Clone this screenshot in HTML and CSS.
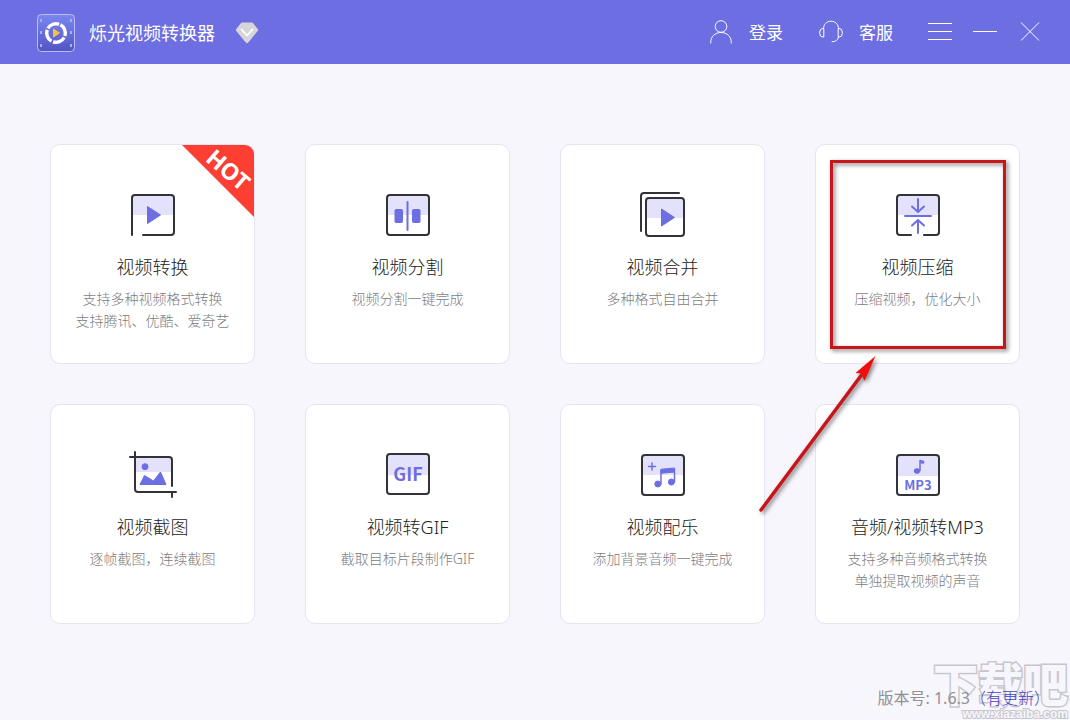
FILE: index.html
```html
<!DOCTYPE html>
<html lang="zh-CN">
<head>
  <meta charset="UTF-8" />
  <meta name="viewport" content="width=device-width, initial-scale=1.0"/>
  <title>烁光视频转换器</title>
  <link rel="stylesheet" href="styles.css">
</head>
<body>
  <header class="topbar">
    <svg class="logo" viewBox="0 0 38 38">
      <defs>
        <linearGradient id="logoBg" x1="0" y1="0" x2="0" y2="1">
          <stop offset="0" stop-color="#7b86f0"/>
          <stop offset="1" stop-color="#5255c4"/>
        </linearGradient>
      </defs>
      <rect x="0.5" y="0.5" width="37" height="37" rx="4" fill="url(#logoBg)" stroke="#b9bdf6"/>
      <g fill="#a9b0f7">
        <rect x="3" y="5" width="2" height="3"/><rect x="3" y="17" width="2" height="3"/><rect x="3" y="30" width="2" height="3"/>
        <rect x="33" y="5" width="2" height="3"/><rect x="33" y="17" width="2" height="3"/><rect x="33" y="30" width="2" height="3"/>
      </g>
      <circle cx="19" cy="19" r="9.3" fill="none" stroke="#fff" stroke-width="3.4" stroke-dasharray="12.9 1.7" transform="rotate(-62 19 19)"/>
      <path d="M16.500 15v8l6-4z" fill="#f5c04a" stroke="#f5c04a" stroke-linejoin="round"/>
    </svg>
    <h1>烁光视频转换器</h1>
    <svg class="vip" viewBox="0 0 24 22">
      <path d="M6.500 1h11L23 8 12.800 20.500q-.8.8-1.600 0L1 8z" fill="#d6d6da" stroke="#d6d6da" stroke-linejoin="round"/>
      <path d="M6.500 7.500l5.500 6 5.500-6" fill="none" stroke="#fff" stroke-width="1.800" stroke-linecap="round" stroke-linejoin="round"/>
    </svg>
    <nav class="actions">
      <button class="action">
        <svg viewBox="0 1 24 24"><circle cx="12" cy="6.500" r="5.800"/><path d="M1.700 23.500v-1C1.700 16.500 6 12.500 12 12.500s10.300 4 10.300 10v1"/></svg>
        登录
      </button>
      <button class="action">
        <svg viewBox="0 1 24 24"><path d="M4.500 9C4.500 4.500 7.500 1.200 12 1.200S19.500 4.500 19.500 9"/><path d="M4.800 8.500v8.500H4Q.7 17 .7 13.500v-1.500Q.7 8.500 4 8.500zM19.200 8.500v8.500h.8q3.300 0 3.300-3.500v-1.500q0-3.500-3.300-3.500z"/><path d="M19.500 17c-.5 3-3 4.800-6.800 4.800"/></svg>
        客服
      </button>
    </nav>
    <div class="window-buttons">
      <button aria-label="菜单"><svg viewBox="0 1 24 20"><path d="M0 1.500h24M0 9.500h24M0 17.500h24"/></svg></button>
      <button aria-label="最小化"><svg viewBox="0 1 24 20"><path d="M0 9.500h24"/></svg></button>
      <button aria-label="关闭"><svg viewBox="0 1 24 20"><path d="M3 .5l18 18M21 .5l-18 18"/></svg></button>
    </div>
  </header>

  <main class="tools">
    <a class="card" href="#convert">
      <svg class="hot" viewBox="0 0 72 72">
        <path d="M0 0h72v72z" fill="#fd3e33"/>
        <text x="46" y="33" transform="rotate(41 46 25)">HOT</text>
      </svg>
      <svg class="icon" viewBox="0 0 51 50">
        <path class="tint" d="M5 25V8q0-3 3-3h36q3 0 3 3v17z"/>
        <path class="line" d="M5 45V8q0-3 3-3h36q3 0 3 3v34q0 3-3 3H16"/>
        <path class="solid" d="M20.500 16.500v17l13-8.500z"/>
      </svg>
      <h2>视频转换</h2>
      <p>支持多种视频格式转换<br>支持腾讯、优酷、爱奇艺</p>
    </a>

    <a class="card" href="#split">
      <svg class="icon" viewBox="0 0 51 50">
        <path class="tint" d="M5 25V8q0-3 3-3h36q3 0 3 3v17z"/>
        <rect class="line" x="5" y="5" width="42" height="40" rx="3"/>
        <rect class="solid" x="13" y="19.500" width="7.500" height="13" rx="1"/>
        <rect class="solid" x="30.500" y="19.500" width="7.500" height="13" rx="1"/>
        <path class="accent" d="M25.500 12v28"/>
      </svg>
      <h2>视频分割</h2>
      <p>视频分割一键完成</p>
    </a>

    <a class="card" href="#merge">
      <svg class="icon" viewBox="0 0 51 50">
        <path class="tint" d="M9 28V11q0-3 3-3h32q3 0 3 3v17z"/>
        <path class="line" d="M4 41V6q0-3 3-3h35"/>
        <rect class="line" x="9" y="8" width="38" height="38" rx="3"/>
        <path class="solid" d="M24.500 19v17l13-8.500z"/>
      </svg>
      <h2>视频合并</h2>
      <p>多种格式自由合并</p>
    </a>

    <a class="card marked" href="#compress">
      <svg class="icon" viewBox="0 0 51 50">
        <path class="tint" d="M5 25V8q0-3 3-3h36q3 0 3 3v17z"/>
        <path class="line" d="M19 45H8q-3 0-3-3V8q0-3 3-3h36q3 0 3 3v34q0 3-3 3H32"/>
        <path class="accent" d="M13 26h26M26 9v13M20 16.500l6 5.500 6-5.500M26 43V30M20 35.500l6-5.500 6 5.500"/>
      </svg>
      <h2>视频压缩</h2>
      <p>压缩视频，优化大小</p>
      <span class="frame"></span>
      <svg class="arrow" viewBox="0 0 140 180">
        <path d="M11 165L113 28" fill="none" stroke="#c8141a" stroke-width="3.500" stroke-linecap="round"/>
        <path d="M125.500 11L105.500 28l5.500.5 3.500 7.200z" fill="#f20d0d"/>
      </svg>
    </a>

    <a class="card" href="#crop">
      <svg class="icon" viewBox="0 0 51 50">
        <path class="tint" d="M8 22V7h34q3 0 3 3v12z"/>
        <path class="line" d="M3 7h39q3 0 3 3v26M8 2v37q0 3 3 3h38M45 42v5"/>
        <circle class="solid" cx="18" cy="16.700" r="3"/>
        <path class="solid" d="M13 34.500L17.500 25.500l9 5.500 7-9 5.500 12.500z"/>
      </svg>
      <h2>视频截图</h2>
      <p>逐帧截图，连续截图</p>
    </a>

    <a class="card" href="#gif">
      <svg class="icon" viewBox="0 0 51 50">
        <path class="tint" d="M5 25V7q0-3 3-3h36q3 0 3 3v18z"/>
        <rect class="line" x="5" y="4" width="42" height="40" rx="3"/>
        <text class="gif" x="26" y="31">GIF</text>
      </svg>
      <h2>视频转GIF</h2>
      <p>截取目标片段制作GIF</p>
    </a>

    <a class="card" href="#music">
      <svg class="icon" viewBox="0 0 51 50">
        <path class="tint" d="M5 25V8q0-3 3-3h36q3 0 3 3v17z"/>
        <rect class="line" x="5" y="5" width="42" height="40" rx="3"/>
        <path class="accent thin" d="M11.500 16.500h7M15 13v7M24 34V20M37.500 32V19"/>
        <path class="solid" d="M24 19.300l13.500-1.300v4L24 23.300z"/>
        <circle class="solid" cx="20.800" cy="34" r="3"/>
        <circle class="solid" cx="34.400" cy="32" r="3"/>
      </svg>
      <h2>视频配乐</h2>
      <p>添加背景音频一键完成</p>
    </a>

    <a class="card" href="#mp3">
      <svg class="icon" viewBox="0 0 51 50">
        <path class="tint" d="M5 26V8q0-3 3-3h36q3 0 3 3v18z"/>
        <rect class="line" x="5" y="5" width="42" height="40" rx="3"/>
        <ellipse class="solid" cx="25" cy="21" rx="2.800" ry="2.300"/>
        <path class="accent thin" d="M28 20.500V10.500l3.500 1v1.500l-3.500-.5"/>
        <text class="mp3" x="26" y="40">MP3</text>
      </svg>
      <h2>音频/视频转MP3</h2>
      <p>支持多种音频格式转换<br>单独提取视频的声音</p>
    </a>
  </main>

  <footer class="version">
    <div class="watermark">
      <span class="mark-name">下载吧</span>
      <span class="mark-url">www.xiazaiba.com</span>
    </div>
    <span class="number">版本号: 1.6.3</span><a class="update" href="#update">（有更新）</a>
  </footer>
</body>
</html>
```

FILE: styles.css
```css
* { box-sizing: border-box; }
body {
  margin: 0;
  min-height: 100vh;
  display: flex;
  flex-direction: column;
  background: #f7f6fc;
  color: #333;
  font-family: "Noto Sans", "Noto Sans CJK SC", sans-serif;
}
h1, h2, p { margin: 0; font-weight: 300; }
a { text-decoration: none; }
svg { display: block; flex: none; }
button {
  padding: 0;
  border: 0;
  background: none;
  color: inherit;
  font: inherit;
  cursor: pointer;
}

/* top bar */
.topbar {
  height: 64px;
  padding: 2px 28px 0 37px;
  display: flex;
  align-items: center;
  background: #6c6ee2;
  color: #fff;
}
.topbar h1 {
  margin: 0 20px 0 14px;
  font-size: 18px;
  line-height: 24px;
  font-weight: 400;
}
.logo { width: 38px; height: 38px; }
.vip { width: 24px; height: 22px; }
.actions {
  margin-left: auto;
  display: flex;
  gap: 36px;
}
.action {
  display: flex;
  align-items: center;
  gap: 16px;
  font-size: 17px;
  line-height: 24px;
}
.action svg, .window-buttons svg {
  fill: none;
  stroke: #fff;
  stroke-width: 1;
  overflow: visible;
}
.action svg { width: 24px; height: 24px; }
.window-buttons {
  margin-left: 35px;
  display: flex;
  gap: 21px;
}
.window-buttons svg { width: 24px; height: 20px; }

/* tool cards */
.tools {
  padding: 80px 50px 40px;
  display: grid;
  grid-template-columns: repeat(4, 1fr);
  grid-auto-rows: 220px;
  gap: 40px 50px;
}
.card {
  position: relative;
  padding-top: 45px;
  display: flex;
  flex-direction: column;
  align-items: center;
  background: #fff;
  border: 1px solid #e6e4ee;
  border-radius: 10px;
  text-align: center;
}
.card h2 {
  margin-top: 14px;
  color: #222;
  font-size: 18px;
  line-height: 26px;
}
.card p {
  margin-top: 8px;
  color: #7c7c80;
  font-size: 14px;
  line-height: 22px;
}
.icon { width: 51px; height: 50px; }
.tint { fill: #e4e2fa; }
.line {
  fill: none;
  stroke: #333238;
  stroke-width: 2;
  stroke-linecap: round;
}
.solid {
  fill: #6c6ee2;
  stroke: #6c6ee2;
  stroke-linejoin: round;
}
.accent {
  fill: none;
  stroke: #6c6ee2;
  stroke-width: 2;
  stroke-linecap: round;
  stroke-linejoin: round;
}
.thin { stroke-width: 1.5; }
.icon text {
  fill: #6c6ee2;
  font-weight: 700;
  text-anchor: middle;
}
.gif { font-size: 18px; font-family: "Noto Sans CJK SC", sans-serif; }
.mp3 { font-size: 13px; font-family: "Noto Sans CJK SC", sans-serif; }
.hot {
  position: absolute;
  top: 0;
  right: 0;
  width: 72px;
  height: 72px;
  border-top-right-radius: 9px;
  overflow: hidden;
}
.hot text {
  fill: #fff;
  font-size: 23px;
  font-weight: 700;
  text-anchor: middle;
}

/* highlight over the compress card */
.marked { z-index: 1; }
.frame {
  position: absolute;
  inset: 15px 13px 14px 14px;
  border: 3px solid #c8141a;
  filter: drop-shadow(2px 2px 2px rgba(0, 0, 0, 0.5));
}
.arrow {
  position: absolute;
  top: 200px;
  left: -66px;
  width: 140px;
  height: 180px;
  filter: drop-shadow(2px 2px 2px rgba(0, 0, 0, 0.5));
}

/* footer */
.version {
  position: relative;
  margin-top: auto;
  padding: 0 20px 10px;
  display: flex;
  justify-content: flex-end;
  font-size: 16px;
  line-height: 24px;
}
.number, .update { position: relative; }
.number { color: #919196; }
.update {
  color: #4143c0;
  font-weight: 300;
}
.watermark {
  position: absolute;
  right: 2px;
  bottom: 0;
  display: flex;
  flex-direction: column;
  align-items: flex-end;
  color: #f7f6fc;
  -webkit-text-stroke: 3px #c8c7ce;
  paint-order: stroke;
  pointer-events: none;
}
.mark-name {
  font-size: 45px;
  line-height: 46px;
  font-weight: 900;
}
.mark-url {
  font-family: "Liberation Sans", sans-serif;
  font-size: 12px;
  line-height: 12px;
  font-weight: 700;
  -webkit-text-stroke-width: 2px;
}
```
